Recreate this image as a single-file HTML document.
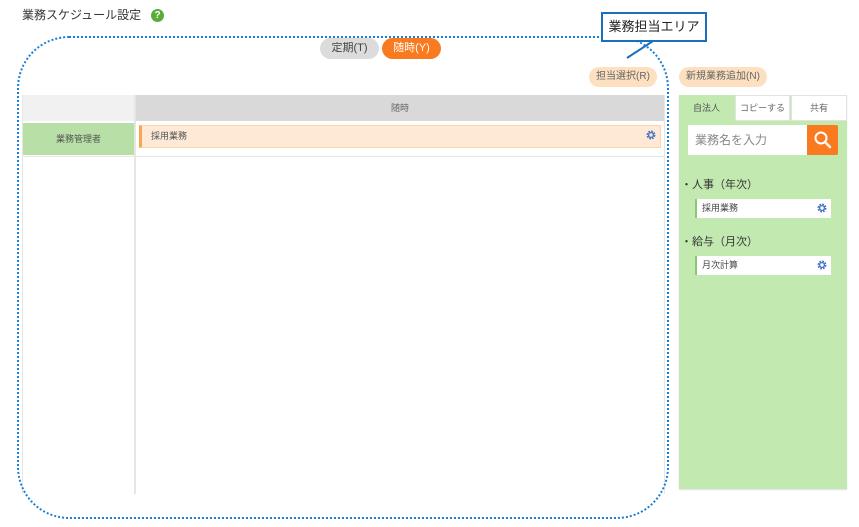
<!DOCTYPE html>
<html><head><meta charset="utf-8"><style>
*{box-sizing:border-box;margin:0;padding:0}
body{width:859px;height:527px;background:#fff;font-family:"Liberation Sans","Noto Sans CJK JP",sans-serif;position:relative;overflow:hidden;color:#333}
.a{position:absolute}
.pill{position:absolute;border-radius:11px;text-align:center;font-size:10px;line-height:20px;color:#666}
.gear{position:absolute;width:10px;height:10px}
</style></head><body>
<div class="a" style="left:22px;top:6px;font-size:12px;color:#333">業務スケジュール設定</div>
<div class="a" style="left:151px;top:9px;width:13px;height:13px;border-radius:50%;background:#5aac3a;color:#fff;font-size:10px;font-weight:bold;text-align:center;line-height:13px">?</div>

<!-- table -->
<div class="a" style="left:22px;top:95px;width:112px;height:26px;background:#f1f1f1"></div>
<div class="a" style="left:135px;top:95px;width:530px;height:26px;background:#d9d9d9;text-align:center;font-size:9px;line-height:26px;color:#666">随時</div>
<div class="a" style="left:23px;top:123px;width:111px;height:32px;background:#b8dfa5;text-align:center;font-size:9px;line-height:32px;color:#555">業務管理者</div>
<div class="a" style="left:139px;top:125px;width:522px;height:23px;background:#fde9d5;border:1px solid #fbd6ae;border-left:3px solid #f7a653;font-size:9px;line-height:20px;padding-left:9px;color:#555">採用業務</div>
<svg class="gear" style="left:646px;top:130px" viewBox="0 0 10 10"><circle cx="5" cy="5" r="3.3" fill="none" stroke="#4a78c8" stroke-width="2.4" stroke-dasharray="1.6 1"/><circle cx="5" cy="5" r="2.4" fill="none" stroke="#4a78c8" stroke-width="1.4"/></svg>
<div class="a" style="left:135px;top:156px;width:530px;height:1px;background:#e6e6e6"></div>
<div class="a" style="left:22px;top:156px;width:113px;height:1px;background:#e6e6e6"></div>
<div class="a" style="left:22px;top:95px;width:1px;height:399px;background:#e6e6e6"></div>
<div class="a" style="left:134px;top:95px;width:2px;height:399px;background:#e6e6e6"></div>
<div class="a" style="left:664px;top:95px;width:1px;height:399px;background:#e6e6e6"></div>

<!-- dotted area -->
<div class="a" style="left:17px;top:36px;width:652px;height:483px;border:2px dotted #1a7fd4;border-radius:52px"></div>

<div class="pill" style="left:320px;top:38px;width:59px;height:21px;background:#dcdcdc;font-size:11px;line-height:21px;color:#444">定期(T)</div>
<div class="pill" style="left:382px;top:38px;width:59px;height:21px;background:#f97a1f;font-size:11px;line-height:21px;color:#fff">随時(Y)</div>

<div class="pill" style="left:589px;top:67px;width:68px;height:20px;background:#fde0c0">担当選択(R)</div>
<div class="pill" style="left:679px;top:67px;width:88px;height:20px;background:#fde0c0">新規業務追加(N)</div>

<!-- callout -->
<svg class="a" style="left:600px;top:30px" width="80" height="40"><line x1="53" y1="11" x2="27" y2="28" stroke="#1a6fbf" stroke-width="2"/></svg>
<div class="a" style="left:601px;top:12px;width:106px;height:30px;border:2px solid #1a6fbf;background:#fff;font-size:13px;line-height:26px;text-align:center;color:#222">業務担当エリア</div>

<!-- right panel -->
<div class="a" style="left:679px;top:95px;width:168px;height:394px;background:#c2e9b0;box-shadow:0 1px 1px #ddd"></div>
<div class="a" style="left:679px;top:95px;width:55px;height:26px;font-size:9px;line-height:26px;text-align:center;color:#555">自法人</div>
<div class="a" style="left:735px;top:95px;width:55px;height:26px;background:#fff;border:1px solid #e3e3e3;font-size:9px;line-height:24px;text-align:center;color:#666">コピーする</div>
<div class="a" style="left:791px;top:95px;width:56px;height:26px;background:#fff;border:1px solid #e3e3e3;font-size:9px;line-height:24px;text-align:center;color:#666">共有</div>
<div class="a" style="left:688px;top:125px;width:120px;height:30px;background:#fff;font-size:12px;line-height:30px;padding-left:7px;color:#888">業務名を入力</div>
<div class="a" style="left:807px;top:125px;width:31px;height:30px;background:#f97a1f;border-radius:0 2px 2px 0"></div>
<svg class="a" style="left:813px;top:130px" width="20" height="20"><circle cx="8" cy="8" r="5.5" fill="none" stroke="#fff" stroke-width="2"/><line x1="12" y1="12" x2="17" y2="17" stroke="#fff" stroke-width="2.4" stroke-linecap="round"/></svg>
<div class="a" style="left:681px;top:176px;font-size:11px;color:#333">・人事（年次）</div>
<div class="a" style="left:695px;top:199px;width:136px;height:19px;background:#fff;border-left:2px solid #8cc672;font-size:9px;line-height:19px;padding-left:5px;color:#444">採用業務</div>
<svg class="gear" style="left:817px;top:203px" viewBox="0 0 10 10"><circle cx="5" cy="5" r="3.3" fill="none" stroke="#4a78c8" stroke-width="2.4" stroke-dasharray="1.6 1"/><circle cx="5" cy="5" r="2.4" fill="none" stroke="#4a78c8" stroke-width="1.4"/></svg>
<div class="a" style="left:681px;top:233px;font-size:11px;color:#333">・給与（月次）</div>
<div class="a" style="left:695px;top:256px;width:136px;height:19px;background:#fff;border-left:2px solid #8cc672;font-size:9px;line-height:19px;padding-left:5px;color:#444">月次計算</div>
<svg class="gear" style="left:817px;top:260px" viewBox="0 0 10 10"><circle cx="5" cy="5" r="3.3" fill="none" stroke="#4a78c8" stroke-width="2.4" stroke-dasharray="1.6 1"/><circle cx="5" cy="5" r="2.4" fill="none" stroke="#4a78c8" stroke-width="1.4"/></svg>
</body></html>
